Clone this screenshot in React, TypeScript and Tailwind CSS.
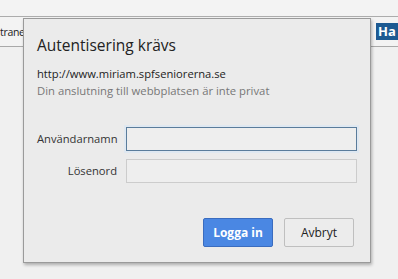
import React from "react";

export default function App() {
  const font = { fontFamily: '"Open Sans", "Noto Sans", Arial, sans-serif' };
  return (
    <div className="relative w-[398px] h-[279px] overflow-hidden bg-[#f0f0f0]" style={font}>
      <div className="h-[17px] bg-[#f3f3f3] border-b border-[#acacac]" />
      <div className="h-[30px] bg-[#f3f3f3] border-b border-[#a9a9a9] flex items-center justify-between">
        <span className="text-[10.5px] leading-[16px] tracking-[-0.3px] text-[#222] mt-[1px]">trane</span>
        <span className="mr-[-8px] mb-[1px] h-[17px] w-[30px] bg-[#1d5a92] text-white font-bold text-[13px] leading-[17px] pl-[2px]">Ha</span>
      </div>

      <div className="absolute left-[23px] top-[18px] w-[348px] h-[245px] bg-[#ebebeb] border border-[#9a9a9a] shadow-[1px_2px_3px_rgba(0,0,0,0.28)] flex flex-col pl-[13px] pr-[13px] pt-[16px] pb-[15px]">
        <div className="text-[15.5px] leading-[20px] text-[#222]">Autentisering krävs</div>
        <div className="mt-[10px] text-[11.2px] leading-[17px] text-[#222]">http://www.miriam.spfseniorerna.se</div>
        <div className="text-[11.3px] leading-[17px] text-[#777]">Din anslutning till webbplatsen är inte privat</div>

        <div className="mt-[28px] grid grid-cols-[80px_1fr] gap-x-[9px] gap-y-[8px] items-center">
          <label className="text-right text-[11.2px] leading-[16px] text-[#333]">Användarnamn</label>
          <div className="h-[24px] border border-[#5a7c9b] bg-[#eeeeee] shadow-[0_0_0_2px_#dfe8f1]" />
          <label className="text-right text-[11.2px] leading-[16px] text-[#333]">Lösenord</label>
          <div className="h-[24px] border border-[#cccccc] bg-[#eeeeee]" />
        </div>

        <div className="mt-auto flex justify-end gap-[11px] pr-[3px]">
          <button className="w-[70px] h-[29px] rounded-[2px] bg-[#4a87e3] border border-[#3a6cbf] text-white font-bold text-[12px]">Logga in</button>
          <button className="w-[70px] h-[29px] rounded-[2px] bg-[#ececec] border border-[#bfbfbf] text-[#222] text-[12px]">Avbryt</button>
        </div>
      </div>
    </div>
  );
}
